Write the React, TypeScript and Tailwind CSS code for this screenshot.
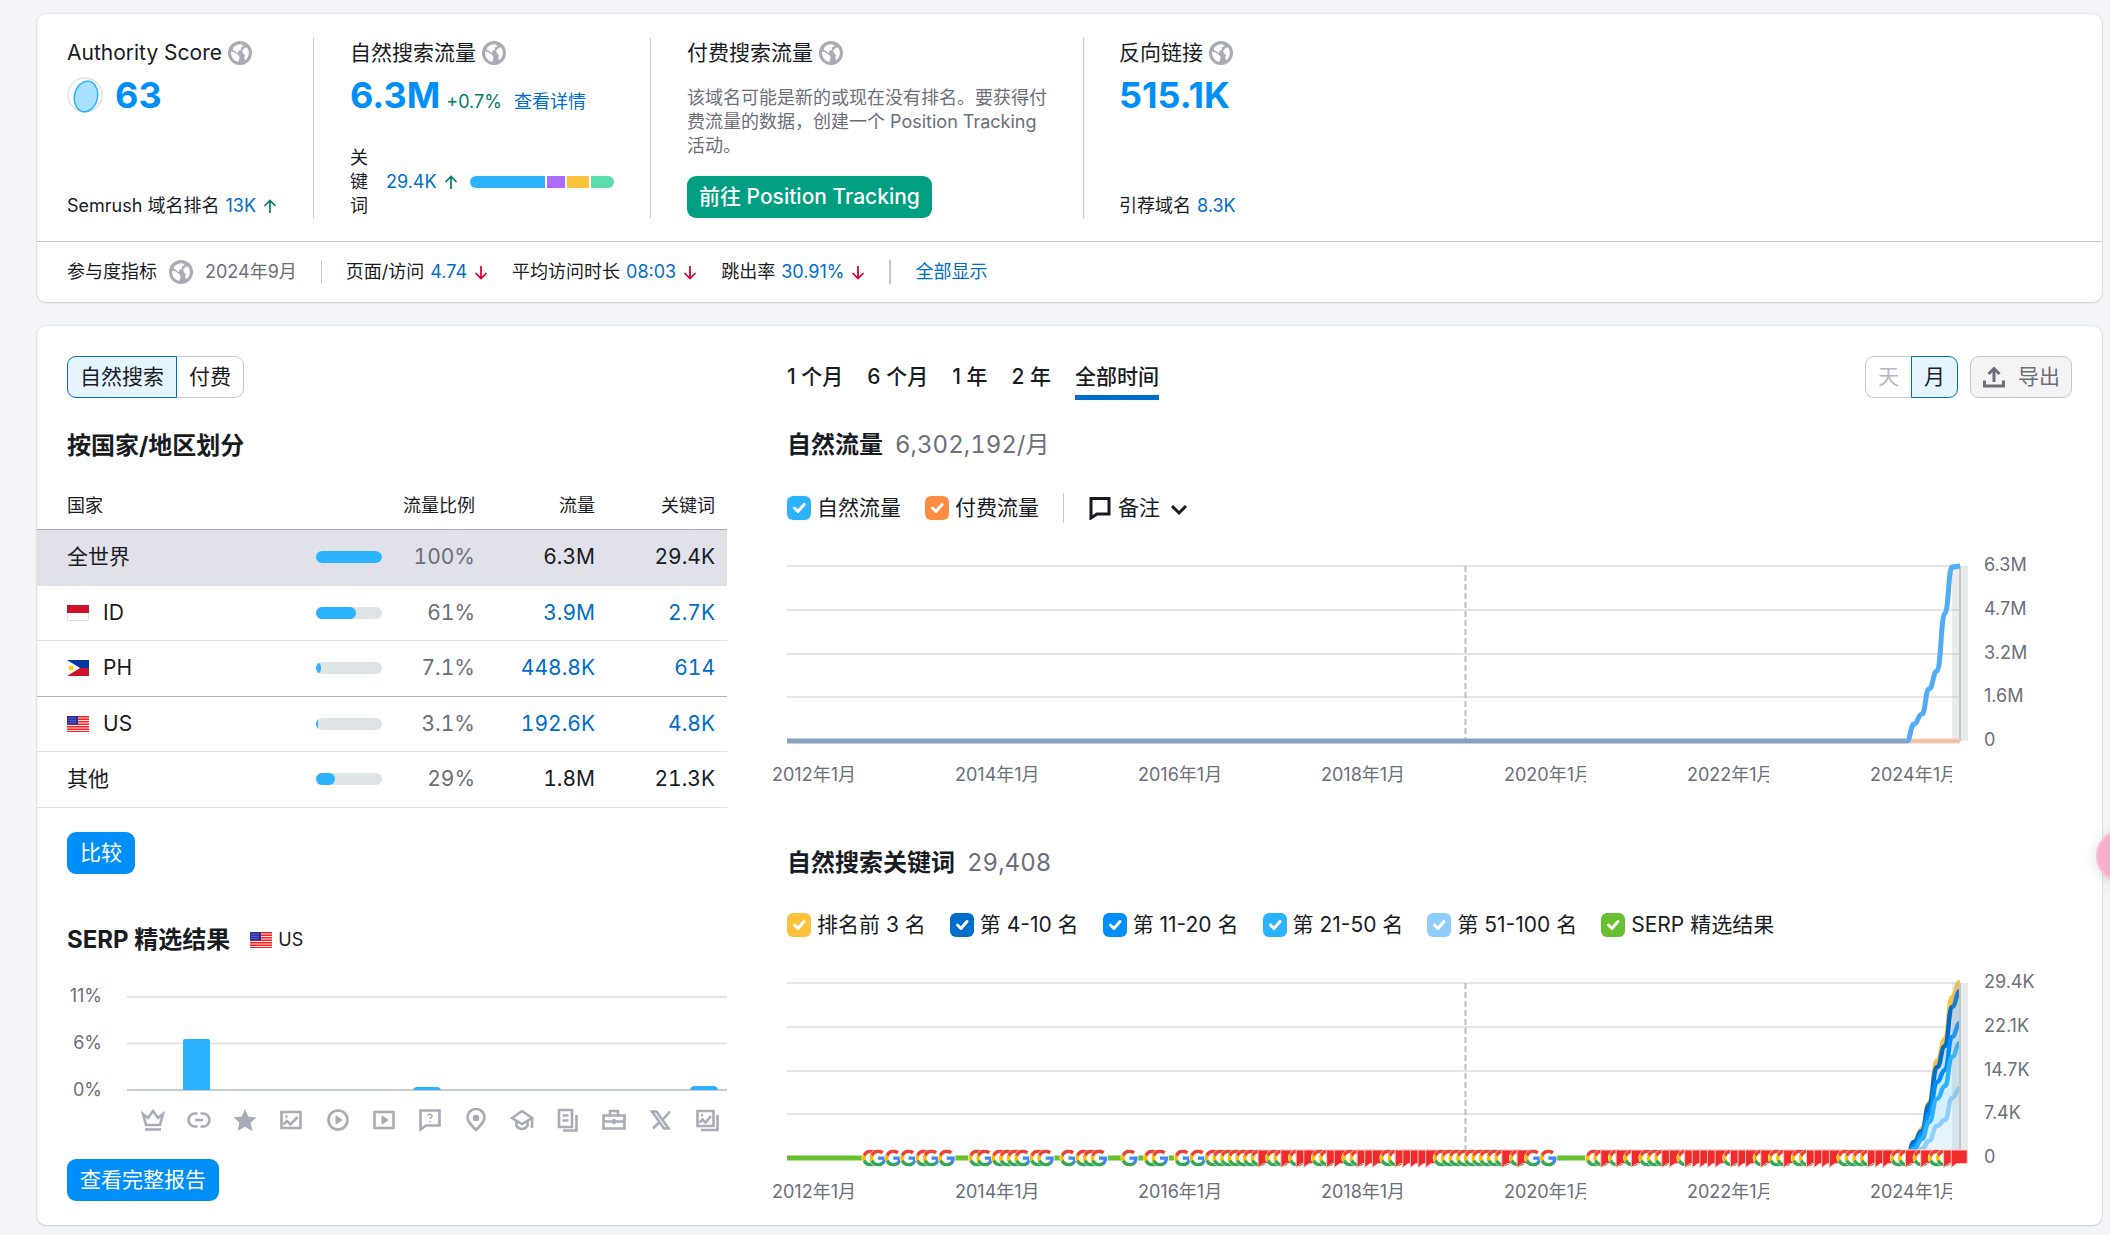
import { useState } from "react";
import type { ReactNode } from "react";

const FONT = "font-['Inter','Noto_Sans_CJK_SC',sans-serif]";

interface CountryRow {
  name: string;
  flag?: "ID" | "PH" | "US";
  share: string;
  percent: number;
  traffic: string;
  keywords: string;
  link?: boolean;
}

interface Series {
  color: string;
  fill: string;
  ys: number[];
}

const COUNTRIES: CountryRow[] = [
  { name: "全世界", share: "100%", percent: 100, traffic: "6.3M", keywords: "29.4K" },
  { name: "ID", flag: "ID", share: "61%", percent: 61, traffic: "3.9M", keywords: "2.7K", link: true },
  { name: "PH", flag: "PH", share: "7.1%", percent: 7.1, traffic: "448.8K", keywords: "614", link: true },
  { name: "US", flag: "US", share: "3.1%", percent: 3.1, traffic: "192.6K", keywords: "4.8K", link: true },
  { name: "其他", share: "29%", percent: 29, traffic: "1.8M", keywords: "21.3K" },
];

const RANGES = ["1 个月", "6 个月", "1 年", "2 年", "全部时间"];
const YEARS = ["2012年1月", "2014年1月", "2016年1月", "2018年1月", "2020年1月", "2022年1月", "2024年1月"];

const POSITIONS = [
  { label: "排名前 3 名", box: "bg-[#fdc23c]" },
  { label: "第 4-10 名", box: "bg-[#006dca]" },
  { label: "第 11-20 名", box: "bg-[#008ff8]" },
  { label: "第 21-50 名", box: "bg-[#2bb3ff]" },
  { label: "第 51-100 名", box: "bg-[#8ecdff]" },
  { label: "SERP 精选结果", box: "bg-[#66c030]" },
];

// one character per month: G = search update, F = feature flag, . = nothing
const EVENTS =
  "GG.G.G.GG.G...GG.GGGG.GG..G.GGG...G..GG..G.G.GGGGGGGFGGFGFFGGFFGGFFFGGFFFFF" +
  "GGGGGGGGGFGFG.G.....GGFGFGFGGGFFGFFFFFGFFFGFGGFGGFFFFGGGGFFFGGFGFGGFF";

const RECENT_X = [1120, 1127, 1135, 1142, 1150, 1158, 1165, 1173];
const TRAFFIC_YS = [187, 170, 160, 135, 117, 59, 13, 12];
const KEYWORD_SERIES: Series[] = [
  { color: "#fdc23c", fill: "#f8e8c4", ys: [187, 171, 158, 132, 90, 68, 26, 11] },
  { color: "#006dca", fill: "#c9def3", ys: [187, 171, 160, 134, 96, 75, 36, 20] },
  { color: "#008ff8", fill: "#cfe9ff", ys: [187, 175, 163, 143, 111, 99, 66, 52] },
  { color: "#2bb3ff", fill: "#d5f0ff", ys: [187, 178, 168, 151, 128, 115, 86, 72] },
  { color: "#8ecdff", fill: "#e6f4ff", ys: [187, 184, 178, 170, 155, 149, 127, 117] },
];

function curve(xs: number[], ys: number[]) {
  return xs.reduce((d, x, i) => {
    if (i === 0) return `M${x} ${ys[0]}`;
    const mid = (xs[i - 1] + x) / 2;
    return `${d} C${mid} ${ys[i - 1]} ${mid} ${ys[i]} ${x} ${ys[i]}`;
  }, "");
}

function GlobeIcon() {
  return (
    <svg className="size-6 shrink-0" viewBox="0 0 24 24" aria-hidden="true">
      <circle cx="12" cy="12" r="12" fill="#a9abb6" />
      <path d="M3 10.500c2.200.2 3.800.8 5 2l2.600 1.700 1 2.300-1.200 4.300C6 20.200 2.600 16 3 10.500z" fill="#fff" />
      <path d="M5.500 6.200C7.500 4 10.300 2.900 13.300 3.200L15.800 5l-2.600 1.300-.4 2.600-2.500.8-.3 2.600-3-2.300-2.500-1.200z" fill="#fff" />
      <path d="M14.800 12l-.6-2.400 2.600-2.800 2.400-.2c2.700 4.400 2.100 9.600-1.900 12.700l-1.200-2.800.9-2.300z" fill="#fff" />
    </svg>
  );
}

function Arrow({ down = false }: { down?: boolean }) {
  return (
    <svg className="w-[15px] h-[15px] shrink-0" viewBox="0 0 15 15" fill="none" strokeWidth="1.700" stroke={down ? "#d1002f" : "#007c65"} aria-hidden="true">
      {down ? <path d="M8 1v12M2.500 8L8 13.500 13.500 8" /> : <path d="M8 14V2M2.500 7L8 1.500 13.500 7" />}
    </svg>
  );
}

function Flag({ code }: { code: "ID" | "PH" | "US" }) {
  return (
    <svg className="w-[22px] h-4 shrink-0" viewBox="0 0 22 16" aria-hidden="true">
      {code === "ID" && (
        <>
          <rect x=".5" y=".5" width="21" height="15" fill="#fff" stroke="#dcdde3" />
          <path d="M0 0h22v8H0z" fill="#ce1126" />
        </>
      )}
      {code === "PH" && (
        <>
          <path d="M0 0h22v8H0z" fill="#0038a8" />
          <path d="M0 8h22v8H0z" fill="#ce1126" />
          <path d="M0 0l13 8-13 8z" fill="#fff" />
          <circle cx="4" cy="8" r="2.500" fill="#fcd116" />
        </>
      )}
      {code === "US" && (
        <>
          <path d="M0 0h22v16H0z" fill="#ff1f1f" />
          <path d="M11 2h11M11 4.500h11M11 7h11M0 9.500h22M0 12h22M0 14.500h22" stroke="#fff" strokeWidth=".9" />
          <path d="M0 0h11v8.500H0z" fill="#2a2a99" />
          <path d="M1.500 2h8M1.500 4.300h8M1.500 6.600h8" stroke="#9c9cdf" strokeDasharray="1 1" />
        </>
      )}
    </svg>
  );
}

function Metric({ title, className, children }: { title: string; className: string; children: ReactNode }) {
  return (
    <div className={`flex flex-col ${className}`}>
      <h2 className="flex items-center gap-1.5 text-[21px] leading-[30px]">
        {title}
        <GlobeIcon />
      </h2>
      {children}
    </div>
  );
}

function Check({ label, box }: { label: string; box: string }) {
  return (
    <label className="flex items-center gap-1.5 text-[21px] leading-[30px]">
      <span className="grid shrink-0">
        <input type="checkbox" defaultChecked className={`col-start-1 row-start-1 size-6 appearance-none rounded-md ${box}`} />
        <svg className="col-start-1 row-start-1 size-6 pointer-events-none" viewBox="0 0 24 24" fill="none" stroke="#fff" strokeWidth="3" strokeLinecap="round" strokeLinejoin="round" aria-hidden="true">
          <path d="M7.500 12l3.500 3.500 6-7" />
        </svg>
      </span>
      {label}
    </label>
  );
}

function Overview() {
  return (
    <section className="rounded-[9px] bg-white shadow-[0_0_2px_rgba(25,27,35,0.2),0_1px_2px_rgba(25,27,35,0.12)]">
      <div className="flex px-[30px] pt-6 pb-[23px]">
        <Metric title="Authority Score" className="w-[247px] border-r border-[#c4c7cf]">
          <div className="mt-[3px] flex items-center gap-3">
            <svg className="size-9" viewBox="0 0 36 36" aria-hidden="true">
              <circle cx="18" cy="18" r="17" fill="none" stroke="#e0e1e9" strokeWidth="1.500" />
              <ellipse cx="19" cy="19.500" rx="11.500" ry="15.500" transform="rotate(12 19 19.500)" fill="#aae0ff" stroke="#2bb3ff" strokeWidth="1.500" />
            </svg>
            <span className="text-[36px] leading-[48px] font-bold text-[#008ff8]">63</span>
          </div>
          <p className="mt-auto flex items-center gap-1.5 text-lg leading-6">
            Semrush 域名排名 <a href="#rank" className="text-[#006dca]">13K</a> <Arrow />
          </p>
        </Metric>
        <Metric title="自然搜索流量" className="w-[337px] border-r border-[#c4c7cf] px-9">
          <div className="mt-[3px] flex items-baseline text-lg">
            <span className="text-[36px] leading-[48px] font-bold text-[#008ff8]">6.3M</span>
            <span className="ml-1.5 text-[#007c65]">+0.7%</span>
            <a href="#details" className="ml-3 text-[#006dca]">查看详情</a>
          </div>
          <div className="mt-auto flex items-center text-lg leading-6">
            <span className="w-[18px]">关键词</span>
            <a href="#keywords" className="ml-[18px] mr-1.5 text-[#006dca]">29.4K</a>
            <Arrow />
            <span className="ml-3 flex h-3 flex-1 gap-0.5 overflow-hidden rounded-full">
              <span className="w-[75px] bg-[#2bb3ff]" />
              <span className="w-[18px] bg-[#ab6cfe]" />
              <span className="w-[22px] bg-[#fdc23c]" />
              <span className="flex-1 bg-[#59ddaa]" />
            </span>
          </div>
        </Metric>
        <Metric title="付费搜索流量" className="w-[433px] border-r border-[#c4c7cf] px-9">
          <p className="mt-[18px] text-lg leading-6 text-[#6c6e79]">
            该域名可能是新的或现在没有排名。要获得付费流量的数据，创建一个 Position Tracking 活动。
          </p>
          <button className="mt-[18px] h-[42px] self-start rounded-[9px] bg-[#009f81] px-3 text-[21px] leading-[30px] font-medium text-white">
            前往 Position Tracking
          </button>
        </Metric>
        <Metric title="反向链接" className="pl-[35px]">
          <span className="mt-[3px] text-[36px] leading-[48px] font-bold text-[#008ff8]">515.1K</span>
          <p className="mt-auto flex gap-1.5 text-lg leading-6">
            引荐域名 <a href="#domains" className="text-[#006dca]">8.3K</a>
          </p>
        </Metric>
      </div>
      <div className="flex items-center border-t border-[#c4c7cf] px-[30px] py-[18px] text-lg leading-6">
        <span className="mr-3">参与度指标</span>
        <GlobeIcon />
        <span className="ml-3 text-[#6c6e79]">2024年9月</span>
        <span className="mx-6 h-6 w-px bg-[#c4c7cf]" />
        <span className="mr-6 flex items-center gap-1.5">
          页面/访问 <a href="#pages" className="text-[#006dca]">4.74</a> <Arrow down />
        </span>
        <span className="mr-6 flex items-center gap-1.5">
          平均访问时长 <a href="#duration" className="text-[#006dca]">08:03</a> <Arrow down />
        </span>
        <span className="flex items-center gap-1.5">
          跳出率 <a href="#bounce" className="text-[#006dca]">30.91%</a> <Arrow down />
        </span>
        <span className="mx-6 h-6 w-0.5 bg-[#c4c7cf]" />
        <a href="#all" className="text-[#006dca]">全部显示</a>
      </div>
    </section>
  );
}

function CountryTable() {
  return (
    <table className="mt-[22px] w-full table-fixed border-collapse text-[21px] tabular-nums">
      <thead>
        <tr className="h-[46px] border-b border-[#a9abb6] text-lg">
          <th className="w-[279px] pl-[30px] text-left font-normal">国家</th>
          <th className="w-[159px] text-right font-normal" colSpan={2}>流量比例</th>
          <th className="w-[120px] text-right font-normal">流量</th>
          <th className="pr-3 text-right font-normal">关键词</th>
        </tr>
      </thead>
      <tbody>
        {COUNTRIES.map((row, i) => (
          <tr
            key={row.name}
            className={`border-b odd:h-14 even:h-[55px] ${i === 0 ? "bg-[#e0e1e9] border-[#e0e1e9]" : i === 2 ? "border-[#a9b8b5]" : "border-[#dce2e4]"}`}
          >
            <td className="pl-[30px]">
              <span className="flex items-center gap-3.5">
                {row.flag && <Flag code={row.flag} />}
                {row.name}
              </span>
            </td>
            <td className="w-[66px]">
              <div className="h-3 w-[66px] overflow-hidden rounded-full bg-[#dee3e5]">
                <div className="h-full rounded-r-full bg-[#2bb3ff]" style={{ width: `${row.percent}%` }} />
              </div>
            </td>
            <td className="text-right text-[#6c6e79]">{row.share}</td>
            <td className="text-right">{row.link ? <a href="#traffic" className="text-[#006dca]">{row.traffic}</a> : row.traffic}</td>
            <td className="pr-3 text-right">{row.link ? <a href="#keywords" className="text-[#006dca]">{row.keywords}</a> : row.keywords}</td>
          </tr>
        ))}
      </tbody>
    </table>
  );
}

const SERP_ICONS: ReactNode[] = [
  <><path d="M2 6l5 4 5-7 5 7 5-4-3 11H5z" /><path d="M4 21.500h16" /></>,
  <path d="M10.500 5.500H8a6.500 6.500 0 000 13h2.500M13.500 5.500H16a6.500 6.500 0 010 13h-2.500M8 12h8" />,
  <path d="M12 1l3.200 7.500 8.300.7-6 5.600 2 8.200-7.500-4.300L4.500 23l2-8.200-6-5.600 8.300-.7z" fill="#a9abb6" strokeWidth="0" />,
  <><path d="M2.500 4h19v16h-19zM4.500 16.500l3.500-3.500 3.500 3.500L18.500 9" /><path d="M6.500 8.500h2" /></>,
  <><circle cx="12" cy="12" r="9.500" /><path d="M10 8l6 4-6 4z" fill="#a9abb6" strokeWidth="1" /></>,
  <><path d="M2.500 4h19v16h-19z" /><path d="M10 8l6 4-6 4z" fill="#a9abb6" strokeWidth="1" /></>,
  <><path d="M2.500 2.500h19v15H8l-5.500 4z" /><path d="M9.800 7.500c.5-1.800 4.200-1.800 4.200.4 0 1.600-2 1.600-2 3M12 13v1.600" strokeWidth="1.600" /></>,
  <><path d="M12 22C7 17 3.500 13.500 3.500 9.500a8.500 8.500 0 0117 0C20.500 13.500 17 17 12 22z" /><circle cx="12" cy="10" r="2" fill="#a9abb6" /></>,
  <><path d="M2 10l10-7 10 7-10 6z" /><path d="M6.500 13v5c3 4 8 4 11 0v-5M22 10v10" /></>,
  <><path d="M3 2h13v17H3zM6.500 7.500h6M6.500 12.500h6" /><path d="M20.500 7v15.500H7" /></>,
  <><path d="M1.500 7.500h21v13h-21zM8 7V3h8v4M2 13.500h20" /><path d="M10.500 13.500h3" strokeWidth="5" /></>,
  <><path d="M3 3.500h4.500l12 17H15zM21 3.500L13.500 12M10 14.500L4 20.500" /></>,
  <><path d="M2.500 3h16v15h-16zM4.500 14.500l3-3 3 3 5.500-6.500" /><path d="M6 7h2M22.500 7v15H6" /></>,
];

function SerpFeatures() {
  return (
    <div>
      <div className="flex pl-[30px]">
        <div className="flex w-[35px] flex-col justify-between text-right text-lg leading-[22px] text-[#6c6e79]">
          <span>11%</span>
          <span>6%</span>
          <span>0%</span>
        </div>
        <svg className="ml-[25px] flex-1" viewBox="0 0 600 116" aria-hidden="true">
          <path d="M0 12h600M0 58.500h600" stroke="#e4e5ec" strokeWidth="2" />
          <path d="M0 105h600" stroke="#c7cbd3" strokeWidth="2" />
          <path d="M56 105V56q0-2 2-2h23q2 0 2 2v49z" fill="#2bb3ff" />
          <path d="M286 105q1-3 4-3h20q3 0 4 3zM563 105q1-4 4-4h20q3 0 4 4z" fill="#2bb3ff" />
        </svg>
      </div>
      <div className="ml-[93px] mt-[7px] flex w-[600px] justify-around">
        {SERP_ICONS.map((icon, i) => (
          <svg key={i} className="size-6" viewBox="0 0 24 24" fill="none" stroke="#a9abb6" strokeWidth="2.600" aria-hidden="true">
            {icon}
          </svg>
        ))}
      </div>
    </div>
  );
}

function Axes({ labels }: { labels: string[] }) {
  return (
    <>
      {labels.map((label, i) => (
        <g key={label}>
          <path d={`M0 ${12 + Math.round(i * 43.75)}H1173`} stroke="#e4e5ec" strokeWidth="2" />
          <text x="1197" y={17 + Math.round(i * 43.75)} fontSize="18" fill="#6c6e79">{label}</text>
        </g>
      ))}
      {YEARS.map((label, i) => (
        <svg key={label} x={-15 + i * 183} y="204" width="82" height="30">
          <text x="0" y="23" fontSize="18" fill="#6c6e79">{label}</text>
        </svg>
      ))}
      <path d="M678.500 12V187" stroke="#b8bfc4" strokeWidth="2" strokeDasharray="6 3" />
    </>
  );
}

function Cursor() {
  return (
    <>
      <path d="M1165 12h16v175h-16z" fill="#9fb0b0" fillOpacity=".24" />
      <path d="M1173 12v175" stroke="#c0c8ca" strokeWidth="2" />
    </>
  );
}

function TrafficChart() {
  return (
    <svg className="mt-[31px] w-full overflow-visible" viewBox="0 0 1285 230" role="img" aria-label="自然流量">
      <Axes labels={["6.3M", "4.7M", "3.2M", "1.6M", "0"]} />
      <Cursor />
      <path d="M1121 187h52" stroke="#f8c9ae" strokeWidth="5" />
      <path d="M1121 187h52" stroke="#d8b9a8" strokeWidth="1" />
      <path d={curve(RECENT_X, TRAFFIC_YS)} fill="none" stroke="#50adf5" strokeWidth="5" />
      <path d="M0 187h1120" stroke="#86a2be" strokeWidth="5" />
    </svg>
  );
}

function EventMark({ kind, x }: { kind: string; x: number }) {
  if (kind === "F") {
    return <path d={`M${x} 179h16v13.500h-10.500l-5.500 4z`} fill="#ef2b2b" stroke="#fbc4c4" strokeWidth="1" />;
  }
  return (
    <g>
      <circle cx={x + 8.5} cy="187" r="9" fill="#fff" />
      <svg x={x} y="178.500" width="17" height="17" viewBox="1 1 22 22">
        <path d="M22.560 12.250c0-.78-.07-1.530-.2-2.250H12v4.260h5.920c-.26 1.370-1.040 2.530-2.210 3.310v2.770h3.570c2.080-1.920 3.280-4.740 3.280-8.090z" fill="#4285f4" />
        <path d="M12 23c2.970 0 5.460-.98 7.280-2.660l-3.570-2.770c-.98.66-2.230 1.060-3.710 1.060-2.860 0-5.290-1.930-6.160-4.530H2.180v2.840C3.990 20.530 7.700 23 12 23z" fill="#34a853" />
        <path d="M5.840 14.090c-.22-.66-.35-1.360-.35-2.090s.13-1.430.35-2.090V7.070H2.180C1.430 8.550 1 10.220 1 12s.43 3.450 1.180 4.930z" fill="#fbbc05" />
        <path d="M12 5.380c1.620 0 3.060.56 4.210 1.640l3.150-3.150C17.450 2.090 14.970 1 12 1 7.700 1 3.990 3.470 2.180 7.070l3.660 2.840c.87-2.600 3.300-4.530 6.160-4.530z" fill="#ea4335" />
      </svg>
    </g>
  );
}

function KeywordChart() {
  return (
    <svg className="mt-[31px] w-full overflow-visible" viewBox="0 0 1285 230" role="img" aria-label="自然搜索关键词">
      <Axes labels={["29.4K", "22.1K", "14.7K", "7.4K", "0"]} />
      {KEYWORD_SERIES.map((s) => (
        <g key={s.color}>
          <path d={`${curve(RECENT_X, s.ys)} V187 H1120 Z`} fill={s.fill} />
          <path d={curve(RECENT_X, s.ys)} fill="none" stroke={s.color} strokeWidth="4.500" />
        </g>
      ))}
      <Cursor />
      <path d="M0 187h1173" stroke="#66c030" strokeWidth="5" />
      {EVENTS.split("").map((kind, i) =>
        kind === "." ? null : <EventMark key={i} kind={kind} x={75 + i * 7.617} />
      )}
    </svg>
  );
}

export default function App() {
  const [range, setRange] = useState("全部时间");

  return (
    <main className={`relative min-h-screen overflow-hidden bg-[#f4f5f9] pt-3.5 pr-2 pb-2.5 pl-[37px] text-[#191b23] ${FONT}`}>
      <Overview />
      <section className="mt-6 flex gap-[60px] rounded-[9px] bg-white pt-[30px] pb-6 shadow-[0_0_2px_rgba(25,27,35,0.2),0_1px_2px_rgba(25,27,35,0.12)]">
        <div className="w-[690px] shrink-0">
          <div className="ml-[30px] flex text-[21px] leading-[30px]">
            <button className="h-[42px] rounded-l-[9px] border border-[#006dca] bg-[#e6f4ff] px-3">自然搜索</button>
            <button className="h-[42px] rounded-r-[9px] border border-l-0 border-[#c4c7cf] px-3">付费</button>
          </div>
          <h3 className="mt-[33px] ml-[30px] text-2xl leading-[30px] font-bold">按国家/地区划分</h3>
          <CountryTable />
          <button className="mt-6 ml-[30px] h-[42px] rounded-[9px] bg-[#008ff8] px-[13px] text-[21px] leading-[30px] text-white">比较</button>
          <div className="mt-[51px] mb-[30px] ml-[30px] flex items-center gap-1.5 text-lg leading-[30px]">
            <h3 className="mr-3.5 text-2xl leading-[30px] font-bold">SERP 精选结果</h3>
            <Flag code="US" />
            US
          </div>
          <SerpFeatures />
          <button className="mt-[27px] ml-[30px] h-[42px] rounded-[9px] bg-[#008ff8] px-[13px] text-[21px] leading-[30px] text-white">查看完整报告</button>
        </div>

        <div className="min-w-0 flex-1 pr-[30px]">
          <div className="flex h-[42px] text-[21px] leading-[30px]">
            <div className="flex h-11 gap-6" role="tablist">
              {RANGES.map((r) => (
                <button
                  key={r}
                  role="tab"
                  aria-selected={r === range}
                  onClick={() => setRange(r)}
                  className={`border-b-[5px] pt-1.5 pb-[3px] font-medium ${r === range ? "border-[#006dca]" : "border-transparent"}`}
                >
                  {r}
                </button>
              ))}
            </div>
            <button className="ml-auto h-[42px] rounded-l-[9px] border border-r-0 border-[#c4c7cf] px-3 text-[#b5b7c0]" disabled>天</button>
            <button className="h-[42px] rounded-r-[9px] border border-[#006dca] bg-[#e6f4ff] px-3">月</button>
            <button className="ml-3 flex h-[42px] items-center gap-3 rounded-[9px] border border-[#c4c7cf] bg-[#f4f4f6] px-[11px] text-[#6c6e79]">
              <svg className="size-6" viewBox="0 0 24 24" fill="none" stroke="#6c6e79" strokeWidth="3" aria-hidden="true">
                <path d="M12 17V4M6.500 9L12 3.500 17.500 9M2.500 15.500v5.500h19v-5.500" />
              </svg>
              导出
            </button>
          </div>

          <div className="mt-8 flex gap-3 text-2xl leading-[30px] tabular-nums">
            <h3 className="font-bold">自然流量</h3>
            <span className="text-[#6c6e79]">6,302,192/月</span>
          </div>
          <div className="mt-[33px] flex items-center gap-6">
            <Check label="自然流量" box="bg-[#2bb3ff]" />
            <Check label="付费流量" box="bg-[#ff8c43]" />
            <span className="h-[30px] w-px bg-[#c4c7cf]" />
            <button className="flex items-center gap-1.5 text-[21px] leading-[30px]">
              <svg className="size-6" viewBox="0 0 24 24" fill="none" stroke="#191b23" strokeWidth="3" aria-hidden="true">
                <path d="M3 2.500h18V18H9l-6 4z" />
              </svg>
              备注
              <svg className="ml-1 h-6 w-[18px]" viewBox="0 0 18 24" fill="none" stroke="#191b23" strokeWidth="3" aria-hidden="true">
                <path d="M2 10l7 7 7-7" />
              </svg>
            </button>
          </div>
          <TrafficChart />

          <div className="mt-16 flex gap-3 text-2xl leading-[30px] tabular-nums">
            <h3 className="font-bold">自然搜索关键词</h3>
            <span className="text-[#6c6e79]">29,408</span>
          </div>
          <div className="mt-8 flex flex-wrap items-center gap-6">
            {POSITIONS.map((p) => (
              <Check key={p.label} label={p.label} box={p.box} />
            ))}
          </div>
          <KeywordChart />
        </div>
      </section>
      <button
        aria-label="助手"
        className="absolute top-[830px] -right-[38px] size-[52px] rounded-full border-2 border-[#f9bdd6] bg-[#f6aecd] shadow-[0_2px_14px_rgba(25,27,35,0.15)]"
      />
    </main>
  );
}
